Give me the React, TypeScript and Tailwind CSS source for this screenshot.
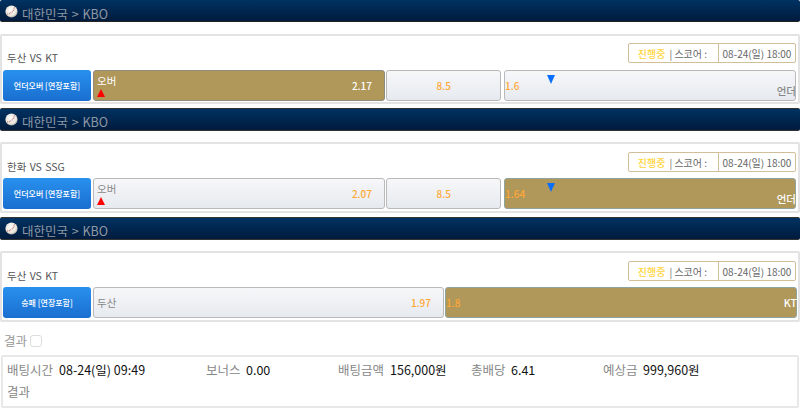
const font = '[font-family:"Noto_Sans_CJK_KR","Noto_Sans",sans-serif]';

function Ball() {
  return (
    <svg width="13" height="13" viewBox="0 0 15 15" className="shrink-0">
      <defs>
        <radialGradient id="ball" cx="45%" cy="40%" r="65%">
          <stop offset="0%" stopColor="#ffffff" />
          <stop offset="70%" stopColor="#e8e4dc" />
          <stop offset="100%" stopColor="#9a9488" />
        </radialGradient>
      </defs>
      <circle cx="7.5" cy="7.5" r="7" fill="url(#ball)" />
      <path d="M2.5 10.5C6 10.5 10 7.5 11 2.5" fill="none" stroke="#b8564a" strokeWidth="1.2" strokeDasharray="1 1" />
    </svg>
  );
}

function League({ first }: { first?: boolean }) {
  return (
    <div className={`${first ? 'h-[22px]' : 'h-[23px] border-t border-[#333]'} flex items-start gap-[4px] pl-[5px] rounded-[2px] bg-gradient-to-b from-[#003262] to-[#001b3d] border-b border-[#222] shrink-0`}>
      <div className={first ? 'mt-[5px]' : 'mt-[4px]'}><Ball /></div>
      <span className={`${first ? 'mt-[8px]' : 'mt-[7px]'} text-[12.5px] leading-none text-[#8f98a4] [word-spacing:1px]`}>대한민국 &gt; KBO</span>
    </div>
  );
}

function Odd({
  label, value, active, arrow, className, align = 'top',
}: {
  label?: string; value?: string; active?: boolean; arrow?: 'up'; className: string; align?: 'top' | 'bottom' | 'middle';
}) {
  return (
    <div className={`relative h-[31px] rounded-[3px] border ${active ? 'bg-[#b0975a] border-[#8d8d80]' : 'bg-gradient-to-b from-[#f7f7f9] to-[#e6eaef] border-[#b9b9b9]'} ${className}`}>
      {label && (
        <span className={`absolute left-[3px] text-[10.5px] leading-none ${active ? 'text-white' : 'text-[#888]'} ${align === 'top' ? 'top-[5px]' : 'top-[10px]'}`}>{label}</span>
      )}
      {arrow && <span className="absolute left-[3px] bottom-[3px] w-0 h-0 border-x-[4px] border-x-transparent border-b-[8px] border-b-[#ff0000]" />}
      {value && <span className={`absolute right-[12px] top-[10px] text-[10px] leading-none font-medium ${active ? 'text-white' : 'text-[#ffa836]'}`}>{value}</span>}
    </div>
  );
}

function Under({ value, label, active, line, className }: { value: string; label: string; active?: boolean; line?: boolean; className: string }) {
  return (
    <div className={`relative h-[31px] rounded-[3px] border ${active ? 'bg-[#b0975a] border-[#8fa39f]' : 'bg-gradient-to-b from-[#f7f7f9] to-[#e6eaef] border-[#b9b9b9]'} ${className}`}>
      <span className="absolute left-0 top-[10px] text-[10px] leading-none font-medium text-[#ffa836]">{value}</span>
      {line && <span className="absolute left-[42px] top-[4px] w-0 h-0 border-x-[4px] border-x-transparent border-t-[9px] border-t-[#0a6fff]" />}
      <span className={`absolute -right-[1px] ${line ? 'top-[15px]' : 'top-[10px]'} text-[10.5px] leading-none font-medium ${active ? 'text-white' : 'text-[#888]'}`}>{label}</span>
    </div>
  );
}

function Game({ title, market, first, children }: { title: string; market: string; first?: boolean; children: React.ReactNode }) {
  return (
    <div className={`${first ? 'mt-[12px] h-[70px]' : 'mt-[11px] h-[71px]'} border-2 border-[#e3e3e3] rounded-[2px] bg-white px-[1px] flex flex-col shrink-0`}>
      <div className={`flex items-start justify-between h-[34px] pr-[1px] ${first ? 'pt-[7px]' : 'pt-[8px]'}`}>
        <span className="pl-[4px] pt-[10px] text-[10.5px] leading-none text-[#555] [word-spacing:1px]">{title}</span>
        <div className="flex h-[20px] w-[168px] border border-[#d2bf99] rounded-[2px] text-[10px]">
          <div className="w-[90px] flex items-center justify-end pr-[11px] gap-[4px] border-r border-[#d2bf99]">
            <span className="text-[#ffd43a] font-medium">진행중</span>
            <span className="text-[#666]">| 스코어 :</span>
          </div>
          <div className="flex-1 flex items-center justify-center text-[#666]">08-24(일) 18:00</div>
        </div>
      </div>
      <div className="flex items-center gap-[1px]">
        <div className="w-[88px] h-[31px] rounded-[3px] bg-gradient-to-b from-[#2990ee] to-[#1a6fd0] text-white text-[8px] font-medium flex items-center justify-center shrink-0">{market}</div>
        {children}
      </div>
    </div>
  );
}

export default function App() {
  return (
    <div className={`w-[800px] h-[408px] overflow-hidden bg-white flex flex-col ${font}`}>
      <League first />
      <Game first title="두산 VS KT" market="언더오버 [연장포함]">
        <Odd label="오버" value="2.17" active arrow="up" className="w-[292px] ml-[1px]" />
        <Odd value="8.5" className="w-[115px] [&>span]:right-[49px]" />
        <Under value="1.6" label="언더" line className="w-[292px] ml-[2px]" />
      </Game>
      <div className="mt-[4px]"><League /></div>
      <Game title="한화 VS SSG" market="언더오버 [연장포함]">
        <Odd label="오버" value="2.07" arrow="up" className="w-[292px] ml-[1px]" />
        <Odd value="8.5" className="w-[115px] [&>span]:right-[49px]" />
        <Under value="1.64" label="언더" line active className="w-[292px] ml-[2px]" />
      </Game>
      <div className="mt-[4px]"><League /></div>
      <Game title="두산 VS KT" market="승패 [연장포함]">
        <Odd label="두산" value="1.97" align="middle" className="w-[351px] ml-[1px]" />
        <Under value="1.8" label="KT" active className="w-[352px]" />
      </Game>
      <div className="mt-[11px] flex items-center gap-[3px] pl-[4px] h-[16px]">
        <span className="text-[12.5px] leading-none text-[#999]">결과</span>
        <span className="w-[12px] h-[12px] border border-[#ddd] rounded-[3px]" />
      </div>
      <div className="mt-[6px] mx-[1px] h-[54px] border-2 border-[#e8e8e8] rounded-[2px] px-[4px] text-[12.5px] leading-none">
        <div className="flex items-center h-[27px]">
          <span className="text-[#888] w-[52px]">배팅시간</span>
          <span className="text-[#111] w-[147px]">08-24(일) 09:49</span>
          <span className="text-[#888] w-[40px]">보너스</span>
          <span className="text-[#111] w-[92px]">0.00</span>
          <span className="text-[#888] w-[52px]">배팅금액</span>
          <span className="text-[#111] w-[81px]">156,000원</span>
          <span className="text-[#888] w-[40px]">총배당</span>
          <span className="text-[#111] w-[92px]">6.41</span>
          <span className="text-[#888] w-[40px]">예상금</span>
          <span className="text-[#111]">999,960원</span>
        </div>
        <div className="text-[#888] mt-[2px]">결과</div>
      </div>
    </div>
  );
}
